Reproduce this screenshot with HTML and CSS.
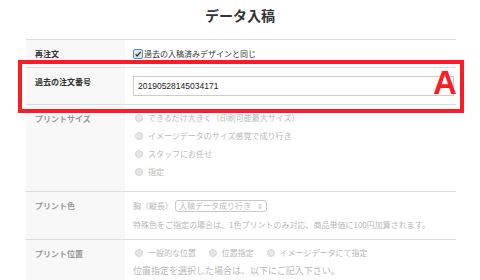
FILE: index.html
```html
<html>
	<head>
		<title>データ入稿</title>
		<link rel="stylesheet" href="styles.css">
	</head>
	<body>

		<h1>データ入稿</h1>

		<div class="form">
			<div class="row">
				<div class="label">再注文</div>
				<div class="field compact">
					<span class="check">
						<svg width="10" height="10" viewBox="0 0 10 10">
							<rect x="0.5" y="0.5" width="9" height="9" rx="1.5" fill="#e4e4e4" stroke="#4a90d9"/>
							<path d="M2.6 5.2 L4.2 6.9 L7.6 2.8" fill="none" stroke="#333" stroke-width="1.3"/>
						</svg>
					</span>過去の入稿済みデザインと同じ
				</div>
			</div>

			<div class="row marked">
				<div class="label">過去の注文番号</div>
				<div class="field compact">
					<input class="text" type="text" value="20190528145034171">
				</div>
				<span class="mark">A</span>
			</div>

			<div class="row muted">
				<div class="label">プリントサイズ</div>
				<div class="field list">
					<div><span class="radio"></span>できるだけ大きく（印刷可能最大サイズ）</div>
					<div><span class="radio"></span>イメージデータのサイズ感覚で成り行き</div>
					<div><span class="radio"></span>スタッフにお任せ</div>
					<div><span class="radio"></span>指定</div>
				</div>
			</div>

			<div class="row muted">
				<div class="label">プリント色</div>
				<div class="field lines">
					<div>胸（縦長）<span class="select">入稿データ成り行き<span class="arrows">⇕</span></span></div>
					<div>特殊色をご指定の場合は、1色プリントのみ対応、商品単価に100円加算されます。</div>
				</div>
			</div>

			<div class="row muted">
				<div class="label">プリント位置</div>
				<div class="field lines">
					<div>
						<span class="option"><span class="radio"></span>一般的な位置</span>
						<span class="option"><span class="radio"></span>位置指定</span>
						<span class="option"><span class="radio"></span>イメージデータにて指定</span>
					</div>
					<div class="note">位置指定を選択した場合は、以下にご記入下さい。</div>
					<div class="area"></div>
				</div>
			</div>
		</div>

	</body>
</html>
```

FILE: styles.css
```css
body {
	font-family: "Noto Sans CJK JP", "Liberation Sans", sans-serif;
	margin: 0;
	background-color: #fff;
	color: #333;
	overflow: hidden;
}

h1 {
	font-size: 14px;
	line-height: 30px;
	height: 39px;
	margin: 0;
	text-align: center;
	color: #333;
}

.form {
	width: 430px;
	margin-left: 26px;
	border-top: 1px solid #ddd;
}

.row {
	display: grid;
	grid-template-columns: 99px 1fr;
	border-bottom: 1px solid #ddd;
	font-size: 8px;
}

.label {
	background-color: #f8f8f8;
	padding: 9px 9px 0 9px;
	line-height: 10px;
	font-weight: bold;
	color: #333;
}

.field {
	padding-left: 8px;
}

.field.compact {
	padding-top: 8px;
	padding-bottom: 8px;
	line-height: 11px;
	display: flex;
	align-items: center;
}

.check {
	display: inline-flex;
	margin-right: 1px;
}

input.text {
	width: 321px;
	height: 20px;
	border: 1px solid #ccc;
	padding: 0 4px;
	font-family: "Liberation Sans", sans-serif;
	font-size: 8.5px;
	color: #222;
	margin: 0;
}

/* annotation */
.marked {
	position: relative;
	outline: 4px solid #fe1c24;
	outline-offset: 4px;
}

.mark {
	position: absolute;
	left: 407px;
	top: -2px;
	font-family: "Liberation Sans", sans-serif;
	font-weight: bold;
	font-size: 33px;
	line-height: 33px;
	color: #fe1c24;
}

.muted .label {
	color: #999;
}

.muted .field {
	color: #b8b8b8;
}

.field.list {
	padding-top: 4px;
	padding-bottom: 10px;
	line-height: 18px;
}

.field.lines {
	padding-top: 4px;
	padding-bottom: 5px;
	line-height: 19px;
}

.muted:last-child .field.lines {
	line-height: 18px;
}

.radio {
	display: inline-block;
	width: 6px;
	height: 6px;
	border-radius: 50%;
	background-color: #e6e6e6;
	border: 1px solid #d4d4d4;
	margin: 0 5px 0 2px;
	vertical-align: -1px;
}

.option {
	margin-right: 9px;
}

.select {
	display: inline-block;
	border: 1px solid #c8c8c8;
	border-radius: 3px;
	line-height: 10px;
	padding: 0 3px;
	margin-left: 2px;
	color: #bbb;
}

.arrows {
	margin-left: 6px;
	font-size: 7px;
}

.note {
	font-size: 9px;
}

.area {
	width: 311px;
	height: 30px;
	border: 1px solid #ddd;
}
```
